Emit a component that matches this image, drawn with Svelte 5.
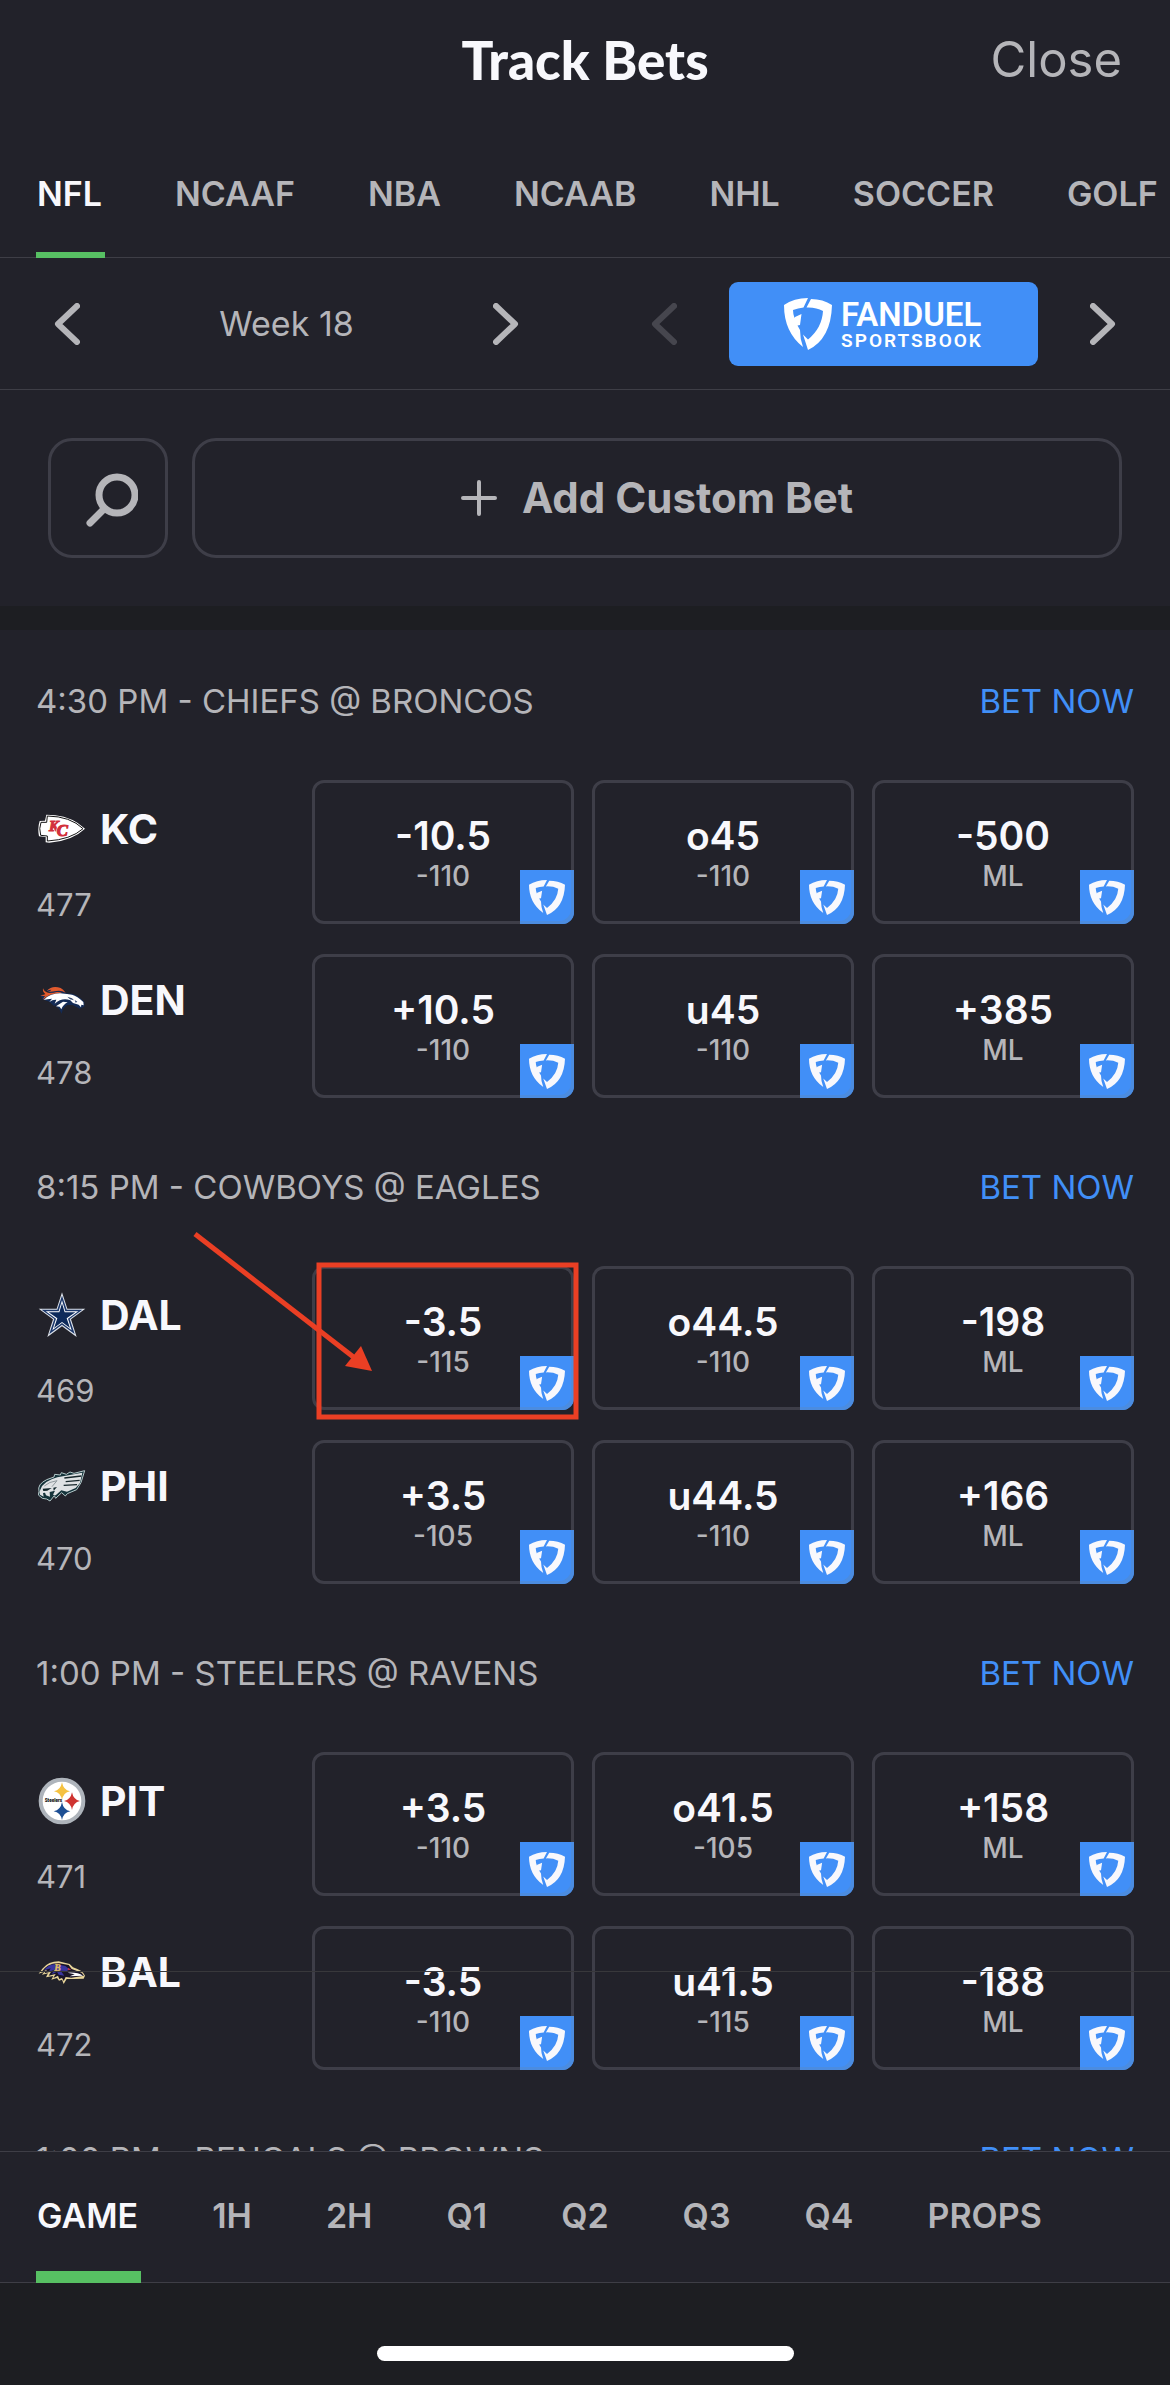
<script lang="ts">
	type Line = [string, string];
	type Team = { code: string; number: string; lines: Line[] };
	type Game = { title: string; teams: Team[] };

	const leagues = ['NFL', 'NCAAF', 'NBA', 'NCAAB', 'NHL', 'SOCCER', 'GOLF'];
	const periods = ['GAME', '1H', '2H', 'Q1', 'Q2', 'Q3', 'Q4', 'PROPS'];

	let league = $state('NFL');
	let period = $state('GAME');

	const highlighted = 'DAL-0';

	const games: Game[] = [
		{
			title: '4:30 PM - CHIEFS @ BRONCOS',
			teams: [
				{ code: 'KC', number: '477', lines: [['-10.5', '-110'], ['o45', '-110'], ['-500', 'ML']] },
				{ code: 'DEN', number: '478', lines: [['+10.5', '-110'], ['u45', '-110'], ['+385', 'ML']] }
			]
		},
		{
			title: '8:15 PM - COWBOYS @ EAGLES',
			teams: [
				{ code: 'DAL', number: '469', lines: [['-3.5', '-115'], ['o44.5', '-110'], ['-198', 'ML']] },
				{ code: 'PHI', number: '470', lines: [['+3.5', '-105'], ['u44.5', '-110'], ['+166', 'ML']] }
			]
		},
		{
			title: '1:00 PM - STEELERS @ RAVENS',
			teams: [
				{ code: 'PIT', number: '471', lines: [['+3.5', '-110'], ['o41.5', '-105'], ['+158', 'ML']] },
				{ code: 'BAL', number: '472', lines: [['-3.5', '-110'], ['u41.5', '-115'], ['-188', 'ML']] }
			]
		},
		{ title: '1:00 PM - BENGALS @ BROWNS', teams: [] }
	];
</script>

{#snippet chevron(next: boolean)}
	<svg class="chevron" viewBox="0 0 26 42" aria-hidden="true">
		<path d={next ? 'M3 3 L22 21 L3 39' : 'M23 3 L4 21 L23 39'} />
	</svg>
{/snippet}

{#snippet shield()}
	<svg class="shield" viewBox="0 0 48 52" preserveAspectRatio="none" aria-hidden="true">
		<path d="M0 7 Q10 0 24 0 L19.5 9.5 Q14 10 9 12 Q9 16 10.5 20 L11 19 L17.5 16 L16 27 L13.5 27.5 L16 32 Q16 41 19 49 Q0 34 0 7Z" />
		<path d="M27 1 Q39 1 48 7 Q47 41 24 52 L19 36.5 L24 41.5 Q38 30 39 13 Q32 9 22.5 9.5Z" />
	</svg>
{/snippet}

{#snippet logo(code: string)}
	{#if code === 'KC'}
		<svg class="logo" viewBox="24 18 144 144" aria-hidden="true">
			<path d="M49 47 L76 49 Q128 55 165 89 Q126 126 58 131 L47 130 L47 114 L27 112 Q22 88 29 66 L45 65Z" fill="#fff" />
			<path d="M52 51 Q121 52 159 89 Q122 122 52 126 L52 111 L32 109 Q26 88 33 70 L50 70Z" fill="#fff" stroke="#151515" stroke-width="3" />
			<text x="57" y="95" class="mark" font-size="44" fill="#d3303c" stroke="#d3303c" stroke-width="3">K</text>
			<text x="80" y="110" class="mark" font-size="50" fill="#d3303c" stroke="#fff" stroke-width="6" paint-order="stroke">C</text>
			<text x="80" y="110" class="mark" font-size="50" fill="#d3303c" stroke="#d3303c" stroke-width="3">C</text>
		</svg>
	{:else if code === 'DEN'}
		<svg class="logo" viewBox="24 21 144 144" aria-hidden="true">
			<path d="M31 77 Q49 85 59 72 L50 64 Q68 49 91 56 L107 73 L127 74 Q150 82 163 99 L163 113 L149 119 L128 108 L112 108 Q98 116 95 134 L87 119 L76 111 L91 102 L72 111 L58 98 L37 91Z" fill="#142b55" />
			<path d="M50 66 Q66 48 92 57 Q99 60 107 71 Q93 63 79 66 Q65 69 54 68 Q62 66 64 62 Q57 62 50 66Z" fill="#e25a2c" />
			<path d="M39 58 Q44 71 58 72 Q72 72 80 69 Q90 68 97 73 Q76 71 61 77 Q46 83 39 92 Q41 85 46 80 Q39 82 31 78 Q42 79 46 75 Q37 69 39 58Z" fill="#e25a2c" />
			<path d="M41 93 Q59 73 90 73 L111 75 L126 77 Q142 81 160 99 L161 109 L154 107 L153 115 L146 107 L129 102 L121 94 Q96 85 74 104 L79 92 Q68 91 58 99 L66 89 Q52 90 41 93Z" fill="#fff" />
			<path d="M78 112 L99 98 L113 100 Q99 107 94 121 L89 113Z" fill="#fff" />
			<path d="M112 83 L126 88 L132 94 L120 91Z M134 93 L142 98 L137 101Z" fill="#32466d" />
		</svg>
	{:else if code === 'DAL'}
		<svg class="logo" viewBox="0 0 144 144" aria-hidden="true">
			<path d="M72 4 L88 53 L142 53 L99 85 L116 138 L72 106 L28 138 L45 85 L2 53 L56 53Z" fill="#dce1e9" />
			<path d="M72 14 L86 56 L133 56 L95 84 L110 129 L72 101 L34 129 L49 84 L11 56 L58 56Z" fill="#1b376a" />
			<path d="M72 28 L82 61 L121 61 L90 83 L101 118 L72 96 L43 118 L54 83 L23 61 L62 61Z" fill="#fff" />
			<path d="M72 37 L80 64 L112 64 L86 82 L96 111 L72 93 L48 111 L58 82 L32 64 L64 64Z" fill="#0d2a5b" />
		</svg>
	{:else if code === 'PHI'}
		<svg class="logo" viewBox="24 21 144 144" aria-hidden="true">
			<path d="M27 109 Q21 88 50 74 L72 66 L74 58 L91 60 L94 53 L109 58 L120 51 L132 55 L164 47 L153 83 L140 104 L112 116 L106 123 L95 113 L77 130 L73 122 L60 138 L50 132 L37 130 L25 120Z" fill="#14333a" stroke="#b5c9ca" stroke-width="3" />
			<path d="M31 104 Q40 78 82 67 L157 53 L150 84 L137 99 L111 110 L94 106 L77 121 L69 119 L75 107 L59 111 L60 125 L48 121 L45 113 L39 114 L41 125 L30 119 Q26 111 31 104Z" fill="#dfe2e4" />
			<path d="M38 101 L65 99 L52 107 L40 108Z M70 98 L81 96 L71 107Z" fill="#10252a" />
			<path d="M103 69 L154 63 M107 80 L149 76 M101 91 L141 89" fill="none" stroke="#17272b" stroke-width="4" />
			<path d="M43 93 Q57 80 81 77 L66 95" fill="none" stroke="#8f989c" stroke-width="3" />
		</svg>
	{:else if code === 'PIT'}
		<svg class="logo" viewBox="0 0 144 144" aria-hidden="true">
			<circle cx="72" cy="72" r="64" fill="#fff" stroke="#aeb4bb" stroke-width="12" />
			<path d="M72 16 Q76 39 96 43 Q76 47 72 69 Q68 47 48 43 Q68 39 72 16Z" fill="#f5c242" />
			<path d="M102 46 Q106 68 126 72 Q106 76 102 99 Q98 76 78 72 Q98 68 102 46Z" fill="#cf3431" />
			<path d="M72 75 Q76 99 97 103 Q76 107 72 129 Q68 107 47 103 Q68 99 72 75Z" fill="#1d4f94" />
			<text x="20" y="75" font-family="Roboto, sans-serif" font-size="14" font-weight="900" fill="#111">Steelers</text>
		</svg>
	{:else}
		<svg class="logo" viewBox="24 11 144 144" aria-hidden="true">
			<path d="M26 88 L37 73 Q56 51 86 51 L119 59 L129 69 Q158 78 165 94 L161 103 L132 104 L110 104 L101 119 L96 106 L87 109 L81 101 L64 106 L70 95 L48 99 L54 87 L36 91 L43 82Z" fill="#e8d59a" />
			<path d="M34 84 Q50 57 84 56 L116 62 L125 74 L155 85 L162 94 L124 100 L107 98 L101 110 L96 101 L88 104 L84 94 L70 101 L77 89 L56 94 L63 82 L43 87 L51 76Z" fill="#191528" />
			<path d="M42 78 Q56 59 78 59 L106 65 L118 75 L111 80 L92 79 L103 94 L86 91 L81 82 L66 90 L72 77 L56 83 L62 72Z" fill="#3a36a0" />
			<text x="73" y="81" class="mark" font-size="29" fill="#e2bd63" stroke="#e2bd63">B</text>
			<path d="M113 85 Q143 83 159 94 L119 96 L134 90Z" fill="#fff" />
			<path d="M114 70 L124 76 L113 78Z" fill="#c3334b" />
		</svg>
	{/if}
{/snippet}

<div class="app">
	<header>
		<h1>Track Bets</h1>
		<button class="close">Close</button>
	</header>

	<nav class="leagues" aria-label="Leagues">
		{#each leagues as name}
			<button class:active={league === name} onclick={() => (league = name)}>{name}</button>
		{/each}
	</nav>

	<div class="pickers">
		<div class="picker">
			<button aria-label="Previous week">{@render chevron(false)}</button>
			<span>Week 18</span>
			<button aria-label="Next week">{@render chevron(true)}</button>
		</div>
		<div class="picker">
			<button aria-label="Previous sportsbook" disabled>{@render chevron(false)}</button>
			<a class="book" href="#sportsbook">
				{@render shield()}
				<span class="book-name">
					<strong>FANDUEL</strong>
					<small>SPORTSBOOK</small>
				</span>
			</a>
			<button aria-label="Next sportsbook">{@render chevron(true)}</button>
		</div>
	</div>

	<div class="actions">
		<button class="search" aria-label="Search">
			<svg viewBox="0 0 60 60" aria-hidden="true">
				<circle cx="39" cy="27" r="18" />
				<path d="M26 41 L12 55" />
			</svg>
		</button>
		<button class="custom">
			<svg viewBox="0 0 36 36" aria-hidden="true"><path d="M18 2 V34 M2 18 H34" /></svg>
			Add Custom Bet
		</button>
	</div>

	<main>
		{#each games as game}
			<section>
				<div class="game-head">
					<h2>{game.title}</h2>
					<a href="#bet">BET NOW</a>
				</div>
				<div class="rows">
					{#each game.teams as team}
						<div class="row">
							<div class="team">
								<div class="name">{@render logo(team.code)}{team.code}</div>
								<div class="number">{team.number}</div>
							</div>
							{#each team.lines as [value, odds], i}
								<button class="line">
									<span class="value">{value}</span>
									<span class="odds">{odds}</span>
									<span class="badge">{@render shield()}</span>
									{#if highlighted === `${team.code}-${i}`}
										<svg class="callout" viewBox="-120 -36 390 192" aria-hidden="true">
											<path class="shaft" d="M-117 -33 L44 92" />
											<path class="head" d="M60 104 L33 99 L49 79Z" />
											<rect x="7" y="-2" width="257" height="152" />
										</svg>
									{/if}
								</button>
							{/each}
						</div>
					{/each}
				</div>
			</section>
		{/each}
	</main>

	<footer>
		<div class="rule"></div>
		<nav class="periods" aria-label="Periods">
			{#each periods as name}
				<button class:active={period === name} onclick={() => (period = name)}>{name}</button>
			{/each}
		</nav>
		<div class="home"><span></span></div>
	</footer>
</div>

<style>
	:global(body) {
		background: #22222a;
	}

	.app {
		display: flex;
		flex-direction: column;
		height: 100vh;
		overflow: hidden;
		background: #22222a;
		color: #b5b5b9;
		font-family: Inter, 'Liberation Sans', sans-serif;
		font-size: 33px;
		line-height: 48px;
	}

	button {
		margin: 0;
		padding: 0;
		border: 0;
		background: none;
		color: inherit;
		font: inherit;
		cursor: pointer;
	}

	a {
		text-decoration: none;
	}

	svg {
		display: block;
		flex: none;
	}

	header {
		display: grid;
		grid-template-columns: 1fr auto 1fr;
		align-items: center;
		height: 120px;
		padding: 0 48px;
	}

	h1 {
		grid-column: 2;
		margin: 0;
		color: #f8f8fc;
		font-family: Lato, sans-serif;
		font-size: 53px;
		font-weight: 900;
	}

	.close {
		justify-self: end;
		font-size: 49px;
		font-weight: 400;
	}

	.leagues,
	.periods {
		display: flex;
		gap: 70px;
		padding: 0 36px;
		overflow: hidden;
		box-shadow: inset 0 -1px #3e3e46;
		font-size: 34px;
		font-weight: 600;
	}

	.leagues {
		flex: none;
		gap: 69px;
		height: 138px;
	}

	.leagues button,
	.periods button {
		flex: none;
		box-sizing: border-box;
		padding: 16px 3px 0 1px;
		border-bottom: 6px solid transparent;
	}

	.leagues .active,
	.periods .active {
		border-bottom-color: #57c063;
		color: #f8f8fc;
	}

	.pickers {
		display: grid;
		grid-template-columns: 1fr 1fr;
		gap: 132px;
		flex: none;
		height: 131px;
		padding: 0 54px;
		border-bottom: 1px solid #3e3e46;
		font-size: 34px;
	}

	.picker {
		display: flex;
		align-items: center;
		justify-content: space-between;
	}

	.chevron {
		width: 26px;
		height: 42px;
		fill: none;
		stroke: #b5b5b9;
		stroke-width: 6;
		stroke-linecap: round;
		stroke-linejoin: round;
	}

	button:disabled .chevron {
		stroke: #46464e;
	}

	.book {
		display: flex;
		flex: 1;
		align-items: center;
		justify-content: center;
		gap: 9px;
		height: 84px;
		margin: 0 52px;
		border-radius: 9px;
		background: #418ff7;
		color: #fff;
		font-family: Roboto, sans-serif;
	}

	.shield {
		fill: #f8f8fc;
	}

	.book .shield {
		width: 48px;
		height: 52px;
		fill: #fff;
	}

	.book-name {
		display: flex;
		flex-direction: column;
	}

	.book-name strong {
		font-size: 33px;
		font-weight: 600;
		line-height: 34px;
	}

	.book-name small {
		font-size: 19px;
		font-weight: 600;
		line-height: 18px;
		letter-spacing: 2px;
	}

	.actions {
		display: flex;
		flex: none;
		gap: 24px;
		padding: 48px;
		border-bottom: 24px solid #1d1e22;
	}

	.actions button {
		display: flex;
		align-items: center;
		justify-content: center;
		box-sizing: border-box;
		height: 120px;
		border: 3px solid #3e3e48;
		border-radius: 24px;
	}

	.actions svg {
		fill: none;
		stroke: #b5b5b9;
		stroke-linecap: round;
	}

	.search {
		flex: 0 0 120px;
	}

	.search svg {
		width: 60px;
		height: 60px;
		stroke-width: 7;
	}

	.custom {
		flex: 1;
		gap: 25px;
		font-size: 42px;
		font-weight: 700;
	}

	.custom svg {
		width: 36px;
		height: 36px;
		stroke-width: 4;
	}

	main {
		flex: 1;
		min-height: 0;
		overflow: hidden;
	}

	section {
		padding: 47px 36px 18px;
	}

	.game-head {
		display: flex;
		justify-content: space-between;
		margin-bottom: 55px;
	}

	h2 {
		margin: 0;
		font-size: 33px;
		font-weight: 400;
	}

	.game-head a {
		color: #418ff7;
	}

	.rows {
		display: grid;
		gap: 30px;
	}

	.row {
		display: grid;
		grid-template-columns: 258px repeat(3, 1fr);
		gap: 18px;
		height: 144px;
	}

	.team {
		display: flex;
		flex-direction: column;
		gap: 28px;
		padding-top: 19px;
	}

	.row:first-child .team {
		gap: 31px;
		padding-top: 22px;
	}

	.name {
		display: flex;
		align-items: center;
		gap: 14px;
		height: 54px;
		padding-left: 2px;
		color: #f8f8fc;
		font-size: 41px;
		font-weight: 700;
	}

	.logo {
		width: 48px;
		height: 48px;
	}

	.mark {
		font-family: 'Liberation Serif', serif;
		font-style: italic;
		font-weight: 700;
	}

	.number {
		font-size: 31px;
		line-height: 36px;
	}

	.line {
		position: relative;
		display: flex;
		flex-direction: column;
		align-items: center;
		justify-content: center;
		padding-top: 3px;
		border: 3px solid #3e3e48;
		border-radius: 12px;
	}

	.value {
		color: #f8f8fc;
		font-size: 39px;
		font-weight: 600;
		line-height: 44px;
	}

	.odds {
		font-size: 28px;
		font-weight: 500;
		line-height: 36px;
	}

	.badge {
		position: absolute;
		right: -3px;
		bottom: -3px;
		display: flex;
		align-items: center;
		justify-content: center;
		width: 54px;
		height: 54px;
		border-bottom-right-radius: 12px;
		background: #418ff7;
		box-shadow: inset -3px -3px #4b8ce0;
	}

	.badge .shield {
		width: 36px;
		height: 35px;
	}

	.callout {
		position: absolute;
		top: -38px;
		left: -123px;
		z-index: 1;
		width: 390px;
		height: 192px;
		fill: none;
		stroke: #ea3f24;
		stroke-width: 5;
		pointer-events: none;
	}

	.callout .head {
		fill: #ea3f24;
		stroke: none;
	}

	footer {
		position: relative;
		flex: none;
		border-top: 1px solid #3e3e46;
		background: #22222a;
	}

	.rule {
		position: absolute;
		top: -181px;
		right: 0;
		left: 0;
		height: 1px;
		background: #38383b;
	}

	.periods {
		height: 131px;
	}

	.periods button {
		border-bottom-width: 12px;
		padding-top: 9px;
	}

	.home {
		display: flex;
		align-items: flex-end;
		justify-content: center;
		box-sizing: border-box;
		height: 102px;
		padding-bottom: 24px;
		background: #1d1e22;
	}

	.home span {
		width: 417px;
		height: 15px;
		border-radius: 8px;
		background: #fff;
	}
</style>
